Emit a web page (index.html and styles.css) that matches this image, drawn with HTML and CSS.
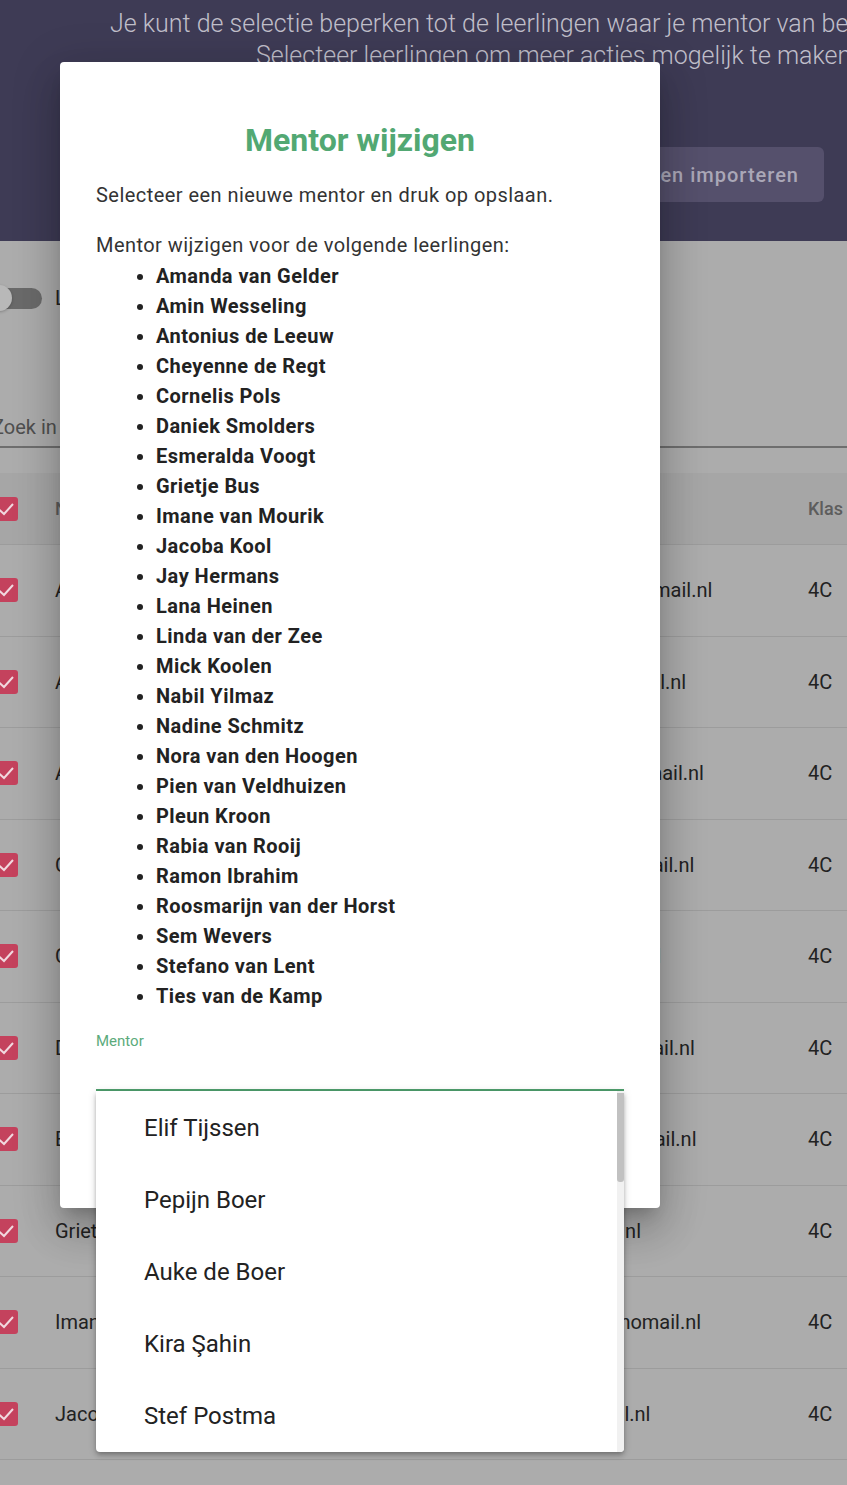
FILE: index.html
```html
<!DOCTYPE html>
<html lang="nl">
<head>
<meta charset="utf-8">
<title>Mentor wijzigen</title>
<link rel="stylesheet" href="styles.css">
</head>
<body>
<div class="page">
  <header class="hero">
    <p class="intro">
      <span class="intro-line">Je kunt de selectie beperken tot de leerlingen waar je mentor van bent met de schakelaar.</span>
      <span class="intro-line second">Selecteer leerlingen om meer acties mogelijk te maken.</span>
    </p>
    <div class="hero-actions">
      <button class="btn-import">Leerlingen importeren</button>
    </div>
  </header>

  <section class="content">
    <div class="toggle-row">
      <span class="toggle"><span class="knob"></span></span>
      <span class="toggle-label">Laat alleen mijn mentorleerlingen zien</span>
    </div>

    <div class="search"><span>Zoek in leerlingen</span></div>

    <div class="students">
      <div class="row head">
        <span class="cb"><svg viewBox="0 0 24 24"><polyline points="5,12.5 10,17 19,7"/></svg></span>
        <span>Naam</span>
        <span>E-mailadres</span>
        <span class="klas">Klas</span>
      </div>
      <div class="row">
        <span class="cb"><svg viewBox="0 0 24 24"><polyline points="5,12.5 10,17 19,7"/></svg></span>
        <span>Amanda van Gelder</span><span>amanda.vangelder@nomail.nl</span><span>4C</span>
      </div>
      <div class="row">
        <span class="cb"><svg viewBox="0 0 24 24"><polyline points="5,12.5 10,17 19,7"/></svg></span>
        <span>Amin Wesseling</span><span>amin.wesseling@nomail.nl</span><span>4C</span>
      </div>
      <div class="row">
        <span class="cb"><svg viewBox="0 0 24 24"><polyline points="5,12.5 10,17 19,7"/></svg></span>
        <span>Antonius de Leeuw</span><span>antonius.deleeuw@nomail.nl</span><span>4C</span>
      </div>
      <div class="row">
        <span class="cb"><svg viewBox="0 0 24 24"><polyline points="5,12.5 10,17 19,7"/></svg></span>
        <span>Cheyenne de Regt</span><span>cheyenne.deregt@nomail.nl</span><span>4C</span>
      </div>
      <div class="row">
        <span class="cb"><svg viewBox="0 0 24 24"><polyline points="5,12.5 10,17 19,7"/></svg></span>
        <span>Cornelis Pols</span><span>cornelis.pols@nomail.nl</span><span>4C</span>
      </div>
      <div class="row">
        <span class="cb"><svg viewBox="0 0 24 24"><polyline points="5,12.5 10,17 19,7"/></svg></span>
        <span>Daniek Smolders</span><span>daniek.smolders@nomail.nl</span><span>4C</span>
      </div>
      <div class="row">
        <span class="cb"><svg viewBox="0 0 24 24"><polyline points="5,12.5 10,17 19,7"/></svg></span>
        <span>Esmeralda Voogt</span><span>esmeralda.voogt@nomail.nl</span><span>4C</span>
      </div>
      <div class="row">
        <span class="cb"><svg viewBox="0 0 24 24"><polyline points="5,12.5 10,17 19,7"/></svg></span>
        <span>Grietje Bus</span><span>grietje.bus@nomail.nl</span><span>4C</span>
      </div>
      <div class="row">
        <span class="cb"><svg viewBox="0 0 24 24"><polyline points="5,12.5 10,17 19,7"/></svg></span>
        <span>Imane van Mourik</span><span>imane.vanmourik@nomail.nl</span><span>4C</span>
      </div>
      <div class="row">
        <span class="cb"><svg viewBox="0 0 24 24"><polyline points="5,12.5 10,17 19,7"/></svg></span>
        <span>Jacoba Kool</span><span>jacoba.kool@nomail.nl</span><span>4C</span>
      </div>
    </div>
  </section>
</div>

<div class="dialog" role="dialog">
  <h2 class="dialog-title">Mentor wijzigen</h2>
  <p class="dialog-text">Selecteer een nieuwe mentor en druk op opslaan.</p>
  <p class="dialog-text">Mentor wijzigen voor de volgende leerlingen:</p>
  <ul class="names">
    <li>Amanda van Gelder</li>
    <li>Amin Wesseling</li>
    <li>Antonius de Leeuw</li>
    <li>Cheyenne de Regt</li>
    <li>Cornelis Pols</li>
    <li>Daniek Smolders</li>
    <li>Esmeralda Voogt</li>
    <li>Grietje Bus</li>
    <li>Imane van Mourik</li>
    <li>Jacoba Kool</li>
    <li>Jay Hermans</li>
    <li>Lana Heinen</li>
    <li>Linda van der Zee</li>
    <li>Mick Koolen</li>
    <li>Nabil Yilmaz</li>
    <li>Nadine Schmitz</li>
    <li>Nora van den Hoogen</li>
    <li>Pien van Veldhuizen</li>
    <li>Pleun Kroon</li>
    <li>Rabia van Rooij</li>
    <li>Ramon Ibrahim</li>
    <li>Roosmarijn van der Horst</li>
    <li>Sem Wevers</li>
    <li>Stefano van Lent</li>
    <li>Ties van de Kamp</li>
  </ul>
  <div class="field">
    <label class="field-label">Mentor</label>
    <div class="field-input"></div>
  </div>
</div>

<div class="dropdown" role="listbox">
  <div class="options">
    <div class="option">Elif Tijssen</div>
    <div class="option">Pepijn Boer</div>
    <div class="option">Auke de Boer</div>
    <div class="option">Kira Şahin</div>
    <div class="option">Stef Postma</div>
  </div>
  <div class="scrollbar"><div class="thumb"></div></div>
</div>
</body>
</html>
```
FILE: styles.css
```css
html, body {
  margin: 0;
  padding: 0;
}
body {
  width: 847px;
  height: 1485px;
  overflow: hidden;
  position: relative;
  background: #acacac;
  font-family: Roboto, "Noto Sans", "Liberation Sans", sans-serif;
  color: #222;
}

/* ---------- page behind the dialog (dimmed) ---------- */
.hero {
  height: 241px;
  box-sizing: border-box;
  padding: 8px 0 0 110px;
  background: #3e3b55;
  overflow: hidden;
}
.intro {
  margin: 0;
  white-space: nowrap;
  font-size: 25px;
  font-weight: 300;
  line-height: 32px;
  color: #c0bfca;
}
.intro-line { display: block; }
.intro-line.second { padding-left: 146px; }

.hero-actions {
  display: flex;
  justify-content: flex-end;
  margin-top: 75px;
  padding-right: 23px;
}
.btn-import {
  height: 55px;
  padding: 0 25px;
  border: 0;
  border-radius: 6px;
  background: #55506c;
  color: #aaa7b7;
  font-family: Roboto, "Noto Sans", sans-serif;
  font-size: 20px;
  font-weight: 500;
  letter-spacing: 1px;
}

.content {
  padding-top: 46px;
}
.toggle-row {
  display: flex;
  align-items: center;
  height: 22px;
}
.toggle {
  position: relative;
  width: 52px;
  height: 21px;
  margin-left: -10px;
  border-radius: 11px;
  background: #6a6a6a;
}
.knob {
  position: absolute;
  left: -4px;
  top: -3px;
  width: 26px;
  height: 26px;
  border-radius: 50%;
  background: #b8b8b8;
  box-shadow: 0 1px 3px rgba(0,0,0,0.25);
}
.toggle-label {
  margin-left: 13px;
  font-size: 20px;
  color: #222;
}

.search {
  margin-top: 106px;
  padding-bottom: 7px;
  border-bottom: 2px solid #6e6e6e;
  font-size: 20px;
  line-height: 24px;
  color: #4f4f4f;
}
.search span {
  display: block;
  margin-left: -8px;
}

.students {
  margin-top: 25px;
}
.row {
  display: grid;
  grid-template-columns: 55px 393px 360px 1fr;
  align-items: center;
  height: 91.5px;
  box-sizing: border-box;
  border-bottom: 1px solid #9c9c9c;
  font-size: 20px;
  color: #222;
  white-space: nowrap;
}
.row.head {
  height: 72px;
  background: #a6a6a6;
  font-size: 18px;
  font-weight: 500;
  color: #5d5d5d;
}
.cb {
  display: flex;
  width: 24px;
  height: 24px;
  margin-left: -6px;
  border-radius: 3px;
  background: #c4425d;
}
.cb svg {
  width: 24px;
  height: 24px;
  fill: none;
  stroke: #f1d9df;
  stroke-width: 2;
}

/* ---------- dialog ---------- */
.dialog {
  position: absolute;
  left: 60px;
  top: 62px;
  width: 600px;
  height: 1146px;
  box-sizing: border-box;
  padding: 58px 36px 0;
  background: #fff;
  border-radius: 4px;
  box-shadow: 0 11px 15px -7px rgba(0,0,0,0.2), 0 24px 38px 3px rgba(0,0,0,0.14), 0 9px 46px 8px rgba(0,0,0,0.12);
}
.dialog-title {
  margin: 0;
  text-align: center;
  font-size: 32px;
  font-weight: 700;
  line-height: 40px;
  color: #52a873;
}
.dialog-text {
  margin: 20px 0 0;
  font-size: 20px;
  line-height: 30px;
  letter-spacing: 0.45px;
  color: #333;
}
.names {
  margin: 1px 0 0;
  padding-left: 60px;
  font-size: 20px;
  font-weight: 700;
  line-height: 30px;
  letter-spacing: 0.45px;
  color: #222;
}
.field {
  margin-top: 22px;
}
.field-label {
  display: block;
  font-size: 15px;
  line-height: 16px;
  color: #5bab7c;
}
.field-input {
  height: 40px;
  border-bottom: 2px solid #4f9f6d;
}

/* ---------- open select panel ---------- */
.dropdown {
  position: absolute;
  left: 96px;
  top: 1091px;
  width: 528px;
  height: 361px;
  display: flex;
  background: #fff;
  border-radius: 0 0 4px 4px;
  overflow: hidden;
  box-shadow: 0 2px 4px -1px rgba(0,0,0,0.2), 0 4px 5px 0 rgba(0,0,0,0.14), 0 1px 10px 0 rgba(0,0,0,0.12);
}
.options {
  flex: 1;
  padding-top: 1px;
}
.option {
  height: 72px;
  line-height: 72px;
  padding-left: 48px;
  font-size: 24px;
  color: #222;
}
.scrollbar {
  width: 7px;
  background: #f1f1f1;
  padding-top: 2px;
}
.thumb {
  height: 89px;
  border-radius: 0 0 3px 3px;
  background: #c1c1c1;
}
```
